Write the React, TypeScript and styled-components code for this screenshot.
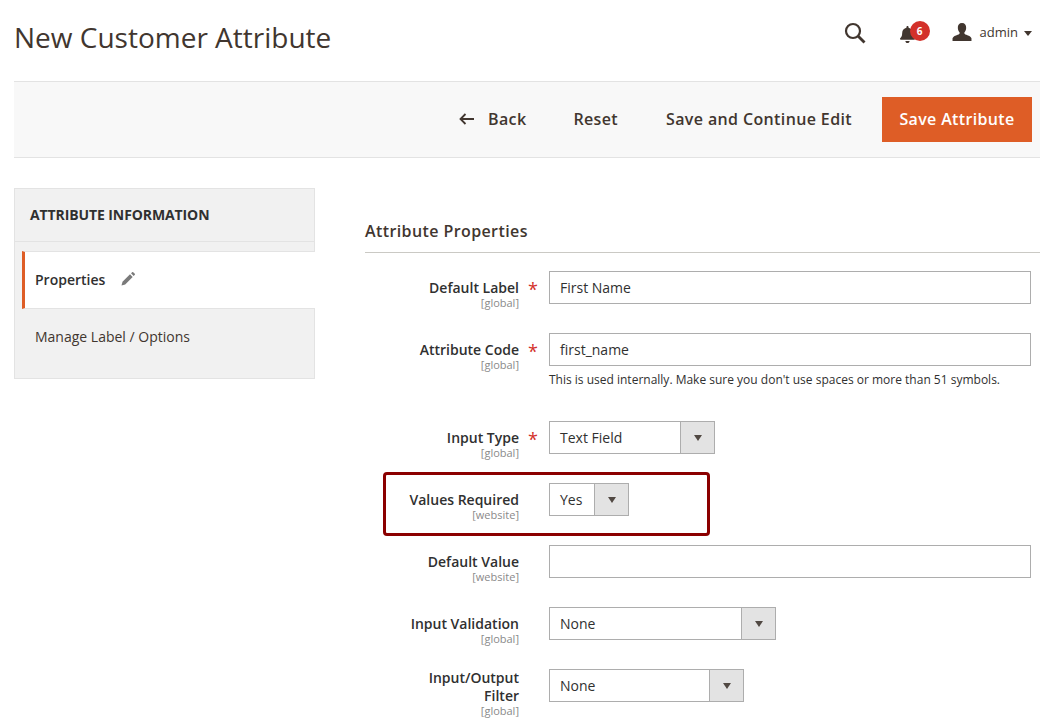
import { FC } from 'react';
import styled, { createGlobalStyle } from 'styled-components';
import { FaBell } from 'react-icons/fa';

const GlobalStyle = createGlobalStyle`
  html, body {
    margin: 0;
    padding: 0;
    height: 725px;
    overflow: hidden;
    background: #fff;
    font-family: "Open Sans", "Liberation Sans", sans-serif;
    color: #41362f;
  }
  *, *::before, *::after { box-sizing: border-box; }
`;

const Page = styled.div`
  width: 1040px;
  height: 725px;
  overflow: hidden;
  padding-left: 14px;
`;

const TopBar = styled.header`
  height: 76px;
  display: flex;
  align-items: flex-start;
  justify-content: space-between;
`;

const Title = styled.h1`
  margin: 18px 0 0;
  font-size: 28px;
  line-height: 39px;
  font-weight: 400;
  color: #41362f;
`;

const TopIcons = styled.div`
  display: flex;
  align-items: center;
  height: 24px;
  margin-top: 21px;
  padding-right: 8px;
`;

const SearchButton = styled.span`
  display: flex;
  margin-right: 33px;
  color: #41362f;
`;

const Bell = styled.span`
  position: relative;
  display: flex;
  width: 20px;
  margin: 3px 33px 0 0;
  color: #41362f;
`;

const Badge = styled.span`
  position: absolute;
  left: 11px;
  top: -5px;
  width: 20px;
  height: 20px;
  border-radius: 50%;
  background: #d3312a;
  color: #fff;
  font-size: 10px;
  font-weight: 700;
  line-height: 20px;
  text-align: center;
`;

const UserIcon = styled.svg`
  margin-bottom: 2px;
`;

const UserName = styled.span`
  font-size: 13px;
  margin: 0 6px 2px 8px;
  color: #41362f;
`;

const Caret = styled.span`
  width: 0;
  height: 0;
  border-left: 4px solid transparent;
  border-right: 4px solid transparent;
  border-top: 5px solid #41362f;
  margin-top: 1px;
`;

const ActionBar = styled.div`
  height: 77px;
  margin-top: 5px;
  padding-right: 8px;
  background: #f8f8f8;
  border-top: 1px solid #e3e3e3;
  border-bottom: 1px solid #e3e3e3;
  display: flex;
  align-items: center;
  justify-content: flex-end;
`;

const ActionLink = styled.span<{ $gap: number }>`
  display: flex;
  align-items: center;
  margin: 0 ${(p) => p.$gap}px 2px 0;
  font-size: 16px;
  font-weight: 600;
  color: #41362f;
  letter-spacing: 0.37px;
`;

const BackIcon = styled.svg`
  margin-right: 14px;
`;

const SaveButton = styled.span`
  width: 150px;
  height: 45px;
  background: #de5d26;
  color: #fff;
  font-size: 16px;
  font-weight: 600;
  letter-spacing: 0.35px;
  line-height: 45px;
  text-align: center;
`;

const Content = styled.div`
  display: flex;
  align-items: flex-start;
  padding-top: 30px;
`;

const Sidebar = styled.aside`
  width: 301px;
  height: 191px;
  margin-right: 50px;
  background: #f1f1f1;
  border: 1px solid #e3e3e3;
  flex-shrink: 0;
`;

const SideHeading = styled.div`
  height: 53px;
  padding-left: 15px;
  border-bottom: 1px solid #e3e3e3;
  font-size: 14px;
  font-weight: 700;
  letter-spacing: -0.1px;
  line-height: 51px;
  color: #303030;
`;

const SideGap = styled.div`
  height: 9px;
`;

const SideActive = styled.div`
  height: 58px;
  margin: 0 -1px 0 7px;
  padding: 0 0 2px 10px;
  background: #fff;
  border-left: 3px solid #de5d26;
  border-top: 1px solid #e3e3e3;
  border-bottom: 1px solid #e3e3e3;
  display: flex;
  align-items: center;
  font-size: 14px;
  font-weight: 600;
  color: #303030;
`;

const EditIcon = styled.svg`
  margin-left: 16px;
`;

const SideItem = styled.div`
  padding: 18px 0 0 20px;
  font-size: 14px;
  line-height: 19px;
  color: #41362f;
`;

const Main = styled.main`
  flex: 1;
  min-width: 0;
`;

const SectionTitle = styled.h2`
  margin: 0;
  height: 65px;
  padding-top: 31px;
  border-bottom: 1px solid #cac9c4;
  font-size: 16px;
  line-height: 24px;
  font-weight: 600;
  letter-spacing: 0.4px;
  color: #41362f;
`;

const Rows = styled.div`
  padding-top: 18px;
  display: flex;
  flex-direction: column;
`;

const Row = styled.div<{ $bottom?: number; $boxed?: boolean }>`
  position: relative;
  display: flex;
  align-items: flex-start;
  margin-bottom: ${(p) => p.$bottom ?? 23}px;

  ${(p) =>
    p.$boxed &&
    `&::before {
      content: '';
      position: absolute;
      left: 18px;
      top: -11px;
      width: 327px;
      height: 64px;
      border: 3px solid #8b0000;
      border-radius: 4px;
      pointer-events: none;
    }`}
`;

const LabelCol = styled.div<{ $wrapped?: boolean }>`
  width: 154px;
  padding: ${(p) => (p.$wrapped ? 0 : 8)}px 0 0 40px;
  text-align: right;
  flex-shrink: 0;
`;

const LabelText = styled.div<{ $wrapped?: boolean }>`
  font-size: 14px;
  line-height: ${(p) => (p.$wrapped ? 17.5 : 17)}px;
  font-weight: 600;
  color: #303030;
`;

const Scope = styled.div`
  font-size: 11px;
  line-height: 14px;
  color: #8a8a8a;
`;

const StarCol = styled.div`
  width: 30px;
  padding: 7px 0 0 9px;
  font-size: 18px;
  line-height: 22px;
  color: #d3312a;
  flex-shrink: 0;
`;

const FieldCol = styled.div`
  flex: 0 0 482px;
`;

const TextBox = styled.div`
  height: 33px;
  width: 482px;
  padding: 0 10px;
  background: #fff;
  border: 1px solid #adadad;
  font-size: 14px;
  line-height: 31px;
  color: #303030;
`;

const Note = styled.div`
  margin-top: 6px;
  height: 16px;
  font-size: 12px;
  line-height: 16px;
  color: #303030;
  white-space: nowrap;
`;

const SelectBox = styled.div<{ $width: number }>`
  width: ${(p) => p.$width}px;
  height: 33px;
  display: flex;
  background: #fff;
  border: 1px solid #adadad;
`;

const SelectValue = styled.span`
  flex: 1;
  padding-left: 10px;
  font-size: 14px;
  line-height: 31px;
  color: #303030;
`;

const SelectArrow = styled.span`
  width: 34px;
  background: #e3e3e3;
  border-left: 1px solid #adadad;
  display: flex;
  align-items: center;
  justify-content: center;

  &::after {
    content: '';
    border-left: 4.5px solid transparent;
    border-right: 4.5px solid transparent;
    border-top: 6px solid #514943;
  }
`;

type FieldProps = {
  label: string;
  scope: string;
  required?: boolean;
  wrapped?: boolean;
  bottom?: number;
  boxed?: boolean;
  children: React.ReactNode;
};

const Field: FC<FieldProps> = ({ label, scope, required, wrapped, bottom, boxed, children }) => (
  <Row $bottom={bottom} $boxed={boxed}>
    <LabelCol $wrapped={wrapped}>
      <LabelText $wrapped={wrapped}>{label}</LabelText>
      <Scope>{scope}</Scope>
    </LabelCol>
    <StarCol>{required ? '*' : ''}</StarCol>
    <FieldCol>{children}</FieldCol>
  </Row>
);

const Select: FC<{ value: string; width: number }> = ({ value, width }) => (
  <SelectBox $width={width}>
    <SelectValue>{value}</SelectValue>
    <SelectArrow />
  </SelectBox>
);

export default function App() {
  return (
    <Page>
      <GlobalStyle />
      <TopBar>
        <Title>New Customer Attribute</Title>
        <TopIcons>
          <SearchButton>
            <svg width="22" height="22" viewBox="0 0 22 22" fill="none" stroke="currentColor">
              <circle cx="9" cy="9" r="7" strokeWidth="2.2" />
              <path d="M14 14l6.500 6.500" strokeWidth="2.800" />
            </svg>
          </SearchButton>
          <Bell>
            <FaBell size={17} />
            <Badge>6</Badge>
          </Bell>
          <UserIcon width="20" height="18" viewBox="0 0 20 19" fill="#41362f">
            <path d="M10 0c3 0 4.600 2.200 4.400 5.200-.1 2-1 3.800-2 5 .1 1 .6 1.600 2.200 2.300 2.400 1 4.400 1.700 5.400 3.500V19H0v-3c1-1.800 3-2.500 5.400-3.500 1.600-.7 2.100-1.300 2.200-2.300-1-1.200-1.900-3-2-5C5.400 2.200 7 0 10 0z" />
          </UserIcon>
          <UserName>admin</UserName>
          <Caret />
        </TopIcons>
      </TopBar>

      <ActionBar>
        <ActionLink $gap={47}>
          <BackIcon width="15" height="12" viewBox="0 0 15 12" fill="none" stroke="#41362f" strokeWidth="1.800">
            <path d="M15 6H2M6.500 1L1.500 6l5 5" />
          </BackIcon>
          Back
        </ActionLink>
        <ActionLink $gap={48}>Reset</ActionLink>
        <ActionLink $gap={30}>Save and Continue Edit</ActionLink>
        <SaveButton>Save Attribute</SaveButton>
      </ActionBar>

      <Content>
        <Sidebar>
          <SideHeading>ATTRIBUTE INFORMATION</SideHeading>
          <SideGap />
          <SideActive>
            Properties
            <EditIcon width="14" height="14" viewBox="0 0 14 14" fill="#7a7a7a">
              <path d="M.5 13.500l1-3.700L9 2.300 11.700 5l-7.500 7.500z" />
              <path d="M10 1.300L11.200.2c.3-.3.7-.3 1 0l1.600 1.600c.3.3.3.7 0 1L12.700 4z" />
            </EditIcon>
          </SideActive>
          <SideItem>Manage Label / Options</SideItem>
        </Sidebar>

        <Main>
          <SectionTitle>Attribute Properties</SectionTitle>
          <Rows>
            <Field label="Default Label" scope="[global]" required>
              <TextBox>First Name</TextBox>
            </Field>
            <Field label="Attribute Code" scope="[global]" required bottom={33}>
              <TextBox>first_name</TextBox>
              <Note>This is used internally. Make sure you don't use spaces or more than 51 symbols.</Note>
            </Field>
            <Field label="Input Type" scope="[global]" required>
              <Select value="Text Field" width={166} />
            </Field>
            <Field label="Values Required" scope="[website]" boxed>
              <Select value="Yes" width={80} />
            </Field>
            <Field label="Default Value" scope="[website]">
              <TextBox />
            </Field>
            <Field label="Input Validation" scope="[global]">
              <Select value="None" width={227} />
            </Field>
            <Field label="Input/Output Filter" scope="[global]" wrapped>
              <Select value="None" width={195} />
            </Field>
          </Rows>
        </Main>
      </Content>
    </Page>
  );
}
